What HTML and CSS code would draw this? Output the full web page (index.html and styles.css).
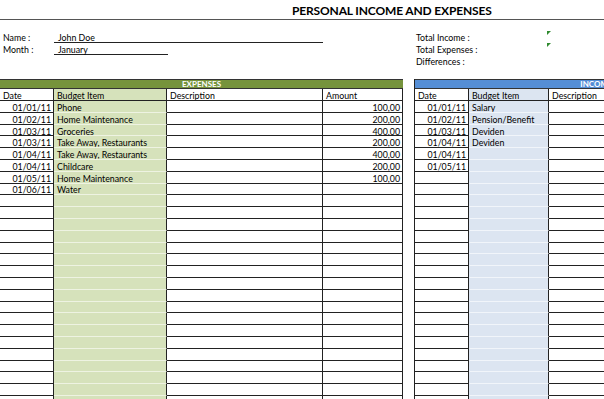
FILE: index.html
```html
<!DOCTYPE html>
<html>
<head>
<meta charset="utf-8">
<link rel="stylesheet" href="styles.css">
</head>
<body>
<header class="title-bar"><h1 class="title">PERSONAL INCOME AND EXPENSES</h1></header>
<section class="info">
  <div class="info-left">
    <div class="field"><span class="label">Name :</span><span class="value value-name">John Doe</span></div>
    <div class="field"><span class="label">Month :</span><span class="value value-month">January</span></div>
  </div>
  <div class="info-right">
    <div class="field"><span class="total-label">Total Income :</span><span class="marker"></span></div>
    <div class="field"><span class="total-label">Total Expenses :</span><span class="marker"></span></div>
    <div class="field"><span class="total-label">Differences :</span></div>
  </div>
</section>
<section class="tables">
  <div class="sheet sheet-expenses">
    <div class="bar bar-green">EXPENSES</div>
    <div class="grid grid-expenses">
      <div class="c h">Date</div><div class="c b g">Budget Item</div><div class="c h">Description</div><div class="c h">Amount</div>
      <div class="c d">01/01/11</div><div class="c b g">Phone</div><div class="c"></div><div class="c a">100,00</div>
      <div class="c d">01/02/11</div><div class="c b g">Home Maintenance</div><div class="c"></div><div class="c a">200,00</div>
      <div class="c d">01/03/11</div><div class="c b g">Groceries</div><div class="c"></div><div class="c a">400,00</div>
      <div class="c d">01/03/11</div><div class="c b g">Take Away, Restaurants</div><div class="c"></div><div class="c a">200,00</div>
      <div class="c d">01/04/11</div><div class="c b g">Take Away, Restaurants</div><div class="c"></div><div class="c a">400,00</div>
      <div class="c d">01/04/11</div><div class="c b g">Childcare</div><div class="c"></div><div class="c a">200,00</div>
      <div class="c d">01/05/11</div><div class="c b g">Home Maintenance</div><div class="c"></div><div class="c a">100,00</div>
      <div class="c d">01/06/11</div><div class="c b g">Water</div><div class="c"></div><div class="c a"></div>
      <div class="c"></div><div class="c b g"></div><div class="c"></div><div class="c"></div>
      <div class="c"></div><div class="c b g"></div><div class="c"></div><div class="c"></div>
      <div class="c"></div><div class="c b g"></div><div class="c"></div><div class="c"></div>
      <div class="c"></div><div class="c b g"></div><div class="c"></div><div class="c"></div>
      <div class="c"></div><div class="c b g"></div><div class="c"></div><div class="c"></div>
      <div class="c"></div><div class="c b g"></div><div class="c"></div><div class="c"></div>
      <div class="c"></div><div class="c b g"></div><div class="c"></div><div class="c"></div>
      <div class="c"></div><div class="c b g"></div><div class="c"></div><div class="c"></div>
      <div class="c"></div><div class="c b g"></div><div class="c"></div><div class="c"></div>
      <div class="c"></div><div class="c b g"></div><div class="c"></div><div class="c"></div>
      <div class="c"></div><div class="c b g"></div><div class="c"></div><div class="c"></div>
      <div class="c"></div><div class="c b g"></div><div class="c"></div><div class="c"></div>
      <div class="c"></div><div class="c b g"></div><div class="c"></div><div class="c"></div>
      <div class="c"></div><div class="c b g"></div><div class="c"></div><div class="c"></div>
      <div class="c"></div><div class="c b g"></div><div class="c"></div><div class="c"></div>
      <div class="c"></div><div class="c b g"></div><div class="c"></div><div class="c"></div>
      <div class="c"></div><div class="c b g"></div><div class="c"></div><div class="c"></div>
      <div class="c"></div><div class="c b g"></div><div class="c"></div><div class="c"></div>
    </div>
  </div>
  <div class="sheet sheet-income">
    <div class="bar bar-blue">INCOME</div>
    <div class="grid grid-income">
      <div class="c h">Date</div><div class="c b u">Budget Item</div><div class="c h">Description</div><div class="c h">Amount</div>
      <div class="c d">01/01/11</div><div class="c b u">Salary</div><div class="c"></div><div class="c a"></div>
      <div class="c d">01/02/11</div><div class="c b u">Pension/Benefit</div><div class="c"></div><div class="c a"></div>
      <div class="c d">01/03/11</div><div class="c b u">Deviden</div><div class="c"></div><div class="c a"></div>
      <div class="c d">01/04/11</div><div class="c b u">Deviden</div><div class="c"></div><div class="c a"></div>
      <div class="c d">01/04/11</div><div class="c b u"></div><div class="c"></div><div class="c a"></div>
      <div class="c d">01/05/11</div><div class="c b u"></div><div class="c"></div><div class="c a"></div>
      <div class="c"></div><div class="c b u"></div><div class="c"></div><div class="c"></div>
      <div class="c"></div><div class="c b u"></div><div class="c"></div><div class="c"></div>
      <div class="c"></div><div class="c b u"></div><div class="c"></div><div class="c"></div>
      <div class="c"></div><div class="c b u"></div><div class="c"></div><div class="c"></div>
      <div class="c"></div><div class="c b u"></div><div class="c"></div><div class="c"></div>
      <div class="c"></div><div class="c b u"></div><div class="c"></div><div class="c"></div>
      <div class="c"></div><div class="c b u"></div><div class="c"></div><div class="c"></div>
      <div class="c"></div><div class="c b u"></div><div class="c"></div><div class="c"></div>
      <div class="c"></div><div class="c b u"></div><div class="c"></div><div class="c"></div>
      <div class="c"></div><div class="c b u"></div><div class="c"></div><div class="c"></div>
      <div class="c"></div><div class="c b u"></div><div class="c"></div><div class="c"></div>
      <div class="c"></div><div class="c b u"></div><div class="c"></div><div class="c"></div>
      <div class="c"></div><div class="c b u"></div><div class="c"></div><div class="c"></div>
      <div class="c"></div><div class="c b u"></div><div class="c"></div><div class="c"></div>
      <div class="c"></div><div class="c b u"></div><div class="c"></div><div class="c"></div>
      <div class="c"></div><div class="c b u"></div><div class="c"></div><div class="c"></div>
      <div class="c"></div><div class="c b u"></div><div class="c"></div><div class="c"></div>
      <div class="c"></div><div class="c b u"></div><div class="c"></div><div class="c"></div>
      <div class="c"></div><div class="c b u"></div><div class="c"></div><div class="c"></div>
      <div class="c"></div><div class="c b u"></div><div class="c"></div><div class="c"></div>
    </div>
  </div>
</section>
</body>
</html>
```

FILE: styles.css
```css
* { box-sizing: border-box; margin: 0; padding: 0; }

body {
  margin: 0;
  width: 604px;
  height: 399px;
  overflow: hidden;
  background: #fff;
  color: #000;
  font-family: Lato, "Liberation Sans", sans-serif;
  font-size: 8.8px;
}

.title-bar {
  height: 20px;
  border-bottom: 1px solid #555;
  padding-left: 292px;
  padding-bottom: 2px;
  display: flex;
  align-items: flex-end;
}

.title {
  font-size: 12px;
  letter-spacing: -0.15px;
  font-weight: 700;
  line-height: 1;
  white-space: nowrap;
}

.info {
  height: 59px;
  padding-top: 11px;
  display: flex;
}

.info-left { width: 416px; flex: none; }
.info-right { flex: 1; }

.field {
  display: flex;
  height: 12px;
  align-items: center;
  padding-top: 1px;
  white-space: nowrap;
}

.label {
  width: 54px;
  padding-left: 3px;
}

.value {
  height: 11px;
  line-height: 11px;
  padding-left: 4px;
  border-bottom: 1px solid #222;
}

.value-name { width: 269px; }
.value-month { width: 114px; }

.total-label { width: 131px; }

.marker {
  align-self: flex-start;
  margin-top: -1px;
  width: 0;
  height: 0;
  border-top: 4px solid #2f8a2f;
  border-right: 4px solid transparent;
}

.tables {
  display: flex;
  gap: 11px;
}

.sheet { flex: none; }
.sheet-expenses { width: 403px; }
.sheet-income { width: 364px; border-left: 1px solid #222; }

.bar {
  height: 10px;
  border-top: 1px solid #333;
  border-bottom: 1px solid #333;
  color: #fff;
  font-weight: 700;
  font-size: 8px;
  line-height: 8px;
  text-align: center;
}

.bar-green { background: #76933c; }
.bar-blue { background: #558ed5; }

.grid {
  display: grid;
  grid-template-rows: 12px;
  grid-auto-rows: 11.8px;
}

.grid-expenses { grid-template-columns: 54px 113px 156px 80px; }
.grid-income { grid-template-columns: 54px 80px 150px 80px; }

.c {
  border-right: 1px solid #222;
  border-bottom: 1px solid #222;
  padding: 2px 3px 0;
  display: flex;
  align-items: center;
  white-space: nowrap;
  overflow: hidden;
}

.d, .a { justify-content: flex-end; padding-right: 2px; }

.g {
  background: #d6e2bb;
  border-bottom-color: #eef3e2;
}

.u {
  background: #dce5f1;
  border-bottom-color: #f1f5fa;
}

.grid .g:nth-child(2), .grid .u:nth-child(2) { border-bottom-color: #222; }
```
